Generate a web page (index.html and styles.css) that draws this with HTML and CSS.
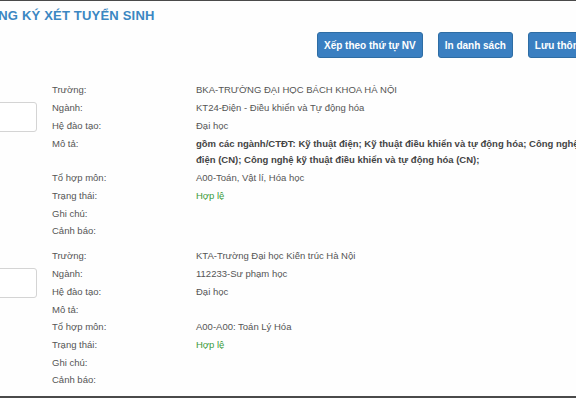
FILE: index.html
```html
<!DOCTYPE html>
<html lang="vi">

<head>
    <meta charset="UTF-8">
    <meta name="viewport" content="width=device-width, initial-scale=1.0">
    <title>Đăng ký xét tuyển sinh</title>
    <link rel="stylesheet" href="styles.css">
</head>

<body>
    <div class="page">
        <h3 class="title">ĐĂNG KÝ XÉT TUYỂN SINH</h3>

        <div class="toolbar">
            <button class="btn">Xếp theo thứ tự NV</button>
            <button class="btn">In danh sách</button>
            <button class="btn">Lưu thông tin</button>
        </div>

        <div class="list">
            <div class="item">
                <div class="order">
                    <input type="text" class="order-input" value="">
                </div>
                <div class="info">
                    <div class="label">Trường:</div>
                    <div class="value">BKA-TRƯỜNG ĐẠI HỌC BÁCH KHOA HÀ NỘI</div>
                    <div class="label">Ngành:</div>
                    <div class="value">KT24-Điện - Điều khiển và Tự động hóa</div>
                    <div class="label">Hệ đào tạo:</div>
                    <div class="value">Đại học</div>
                    <div class="label">Mô tả:</div>
                    <div class="value bold">gồm các ngành/CTĐT: Kỹ thuật điện; Kỹ thuật điều khiển và tự động hóa; Công nghệ kỹ thuật điện (CN); Công nghệ kỹ thuật điều khiển và tự động hóa (CN);</div>
                    <div class="label">Tổ hợp môn:</div>
                    <div class="value">A00-Toán, Vật lí, Hóa học</div>
                    <div class="label">Trạng thái:</div>
                    <div class="value ok">Hợp lệ</div>
                    <div class="label">Ghi chú:</div>
                    <div class="value"></div>
                    <div class="label">Cảnh báo:</div>
                    <div class="value"></div>
                </div>
            </div>

            <div class="item">
                <div class="order">
                    <input type="text" class="order-input" value="">
                </div>
                <div class="info">
                    <div class="label">Trường:</div>
                    <div class="value">KTA-Trường Đại học Kiến trúc Hà Nội</div>
                    <div class="label">Ngành:</div>
                    <div class="value">112233-Sư phạm học</div>
                    <div class="label">Hệ đào tạo:</div>
                    <div class="value">Đại học</div>
                    <div class="label">Mô tả:</div>
                    <div class="value"></div>
                    <div class="label">Tổ hợp môn:</div>
                    <div class="value">A00-A00: Toán Lý Hóa</div>
                    <div class="label">Trạng thái:</div>
                    <div class="value ok">Hợp lệ</div>
                    <div class="label">Ghi chú:</div>
                    <div class="value"></div>
                    <div class="label">Cảnh báo:</div>
                    <div class="value"></div>
                </div>
            </div>
        </div>
    </div>
</body>

</html>
```

FILE: styles.css
```css
html,
body {
    margin: 0;
    padding: 0;
}

body {
    font-family: "Liberation Sans", Arial, sans-serif;
    background-color: #fefefe;
    color: #555;
    height: 398px;
    box-sizing: border-box;
    border-top: 1px solid #4a4a4a;
    border-bottom: 2px solid #4a4a4a;
    overflow: hidden;
}

.page {
    width: 660px;
    margin-left: -21px;
}

.title {
    margin: 0;
    padding-top: 8px;
    font-size: 13px;
    line-height: 14px;
    font-weight: bold;
    color: #3b87c2;
    letter-spacing: 0.2px;
}

.toolbar {
    display: flex;
    gap: 15px;
    margin-top: 9px;
    padding-left: 338px;
}

.btn {
    height: 26px;
    padding: 0 6px;
    background-color: #3a7fc1;
    border: 1px solid #2e6da4;
    border-radius: 3px;
    color: white;
    font-family: "Liberation Sans", Arial, sans-serif;
    font-size: 10px;
    font-weight: bold;
    white-space: nowrap;
    cursor: pointer;
}

.list {
    display: flex;
    flex-direction: column;
    gap: 10px;
    margin-top: 24px;
}

.item {
    display: flex;
}

.order {
    width: 73px;
    padding-top: 20px;
}

.order-input {
    display: block;
    width: 57px;
    height: 30px;
    box-sizing: border-box;
    margin-left: 1px;
    border: 1px solid #d4d4d4;
    border-radius: 3px;
    background: white;
}

.info {
    display: grid;
    grid-template-columns: 144px 440px;
    row-gap: 2px;
    font-size: 9.5px;
}

.label {
    line-height: 15px;
    color: #555;
}

.value {
    line-height: 16px;
    color: #555;
}

.bold {
    font-weight: bold;
    color: #444;
}

.ok {
    color: #3a9a3a;
}
```
